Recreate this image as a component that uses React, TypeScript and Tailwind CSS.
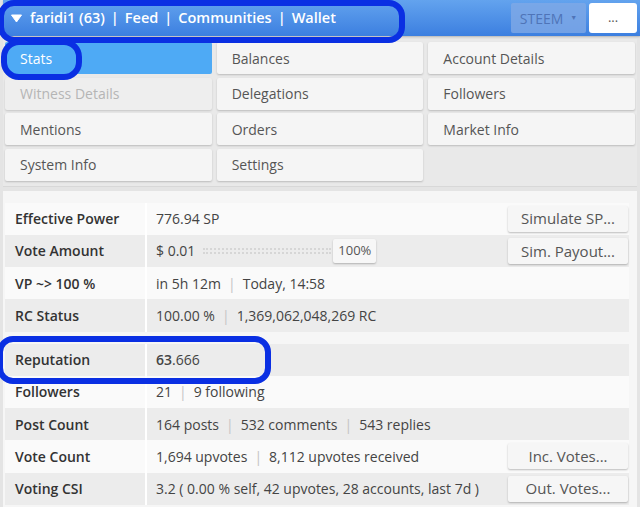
import React from 'react';

const font = { fontFamily: '"Open Sans", "Noto Sans", sans-serif' };

const navItems = [
  { label: 'Stats', active: true },
  { label: 'Balances' },
  { label: 'Account Details' },
  { label: 'Witness Details', disabled: true },
  { label: 'Delegations' },
  { label: 'Followers' },
  { label: 'Mentions' },
  { label: 'Orders' },
  { label: 'Market Info' },
  { label: 'System Info' },
  { label: 'Settings' },
];

function Sep({ wide }: { wide?: boolean }) {
  return <span className={`${wide ? 'mx-[6px] text-white' : 'mx-[7px] text-[#c4c4c4]'}`}>|</span>;
}

function Btn({ children }: { children: React.ReactNode }) {
  return (
    <div className="w-[120px] h-[26px] bg-[#f6f6f6] rounded-[2px] shadow-[0_1px_2px_rgba(0,0,0,0.25)] flex items-center justify-center text-[#555] text-[15px]">
      {children}
    </div>
  );
}

function Row({
  label,
  gray,
  children,
  action,
}: {
  label: string;
  gray?: boolean;
  children: React.ReactNode;
  action?: React.ReactNode;
}) {
  return (
    <div className={`flex h-[32.25px] items-center ${gray ? 'bg-[#ececec]' : 'bg-[#fafafa]'}`}>
      <div className="w-[142px] h-full flex items-center pl-[10px] font-semibold text-[#333] text-[14px] border-r-2 border-white">
        {label}
      </div>
      <div className="flex-1 flex items-center pl-[9px] text-[#444] text-[14px]">{children}</div>
      {action && <div className="pr-[1px]">{action}</div>}
    </div>
  );
}

export default function App() {
  return (
    <div className="relative w-[640px] h-[507px] overflow-hidden bg-[#e4e4e4]" style={font}>
      {/* header */}
      <div className="ml-[3px] h-[36px] rounded-bl-[3px] bg-gradient-to-b from-[#63a3ee] to-[#3c7fe0] flex items-center shadow-[0_1px_2px_rgba(0,0,0,0.2)]">
        <svg width="13" height="9" viewBox="0 0 13 9" className="ml-[7px] mr-[7px]">
          <path d="M1.5 1 L11.5 1 L6.5 8 Z" fill="#fff" stroke="#fff" strokeLinejoin="round" />
        </svg>
        <div className="text-white font-semibold text-[14.5px] flex items-center">
          <span>faridi1 (63)</span>
          <Sep wide />
          <span>Feed</span>
          <Sep wide />
          <span>Communities</span>
          <Sep wide />
          <span>Wallet</span>
        </div>
        <div className="ml-auto flex items-center gap-[3px] pr-[3px]">
          <div className="w-[75px] h-[30px] bg-[#7fa9e6]/80 rounded-[2px] flex items-center justify-center text-[#4f74b8] text-[14px]">
            STEEM <span className="ml-[7px] text-[7px]">▼</span>
          </div>
          <div className="w-[48px] h-[30px] bg-white rounded-[3px] flex items-center justify-center text-[#555] text-[13px]">
            ...
          </div>
        </div>
      </div>

      {/* nav grid */}
      <div className="mx-[3px] mt-[3px] bg-[#e9e9e9] px-[2px] pt-[3px] pb-[5px] border-b border-[#d8d8d8]">
        <div className="grid grid-cols-3 gap-x-[5px] gap-y-[3.5px]">
          {navItems.map((it) => (
            <div
              key={it.label}
              className={`h-[32px] flex items-center pl-[15px] text-[14px] rounded-[2px] ${
                it.active
                  ? 'bg-[#4eaaf5] text-white'
                  : it.disabled
                  ? 'bg-[#eeeeee] text-[#b5b5b5] shadow-[0_1px_2px_rgba(0,0,0,0.15)]'
                  : 'bg-[#f5f5f5] text-[#555] shadow-[0_1px_2px_rgba(0,0,0,0.2)]'
              }`}
            >
              {it.label}
            </div>
          ))}
        </div>
      </div>

      {/* stats table */}
      <div className="mx-[3px] mt-[4px] bg-[#f6f6f6] h-[330px] pt-[12px] px-[2px]">
        <div className="mr-[6px]">
          <Row label="Effective Power" action={<Btn>Simulate SP...</Btn>}>
            776.94 SP
          </Row>
          <Row label="Vote Amount" gray action={<Btn>Sim. Payout...</Btn>}>
            <span>$ 0.01</span>
            <div className="ml-[8px] w-[128px] h-[6px] border-t-2 border-b-2 border-dotted border-[#d6d6d6]" />
            <div className="ml-[2px] w-[43px] h-[24px] bg-[#f7f7f7] rounded-[2px] shadow-[0_1px_2px_rgba(0,0,0,0.25)] flex items-center justify-center text-[13px] text-[#555]">
              100%
            </div>
          </Row>
          <Row label="VP ~> 100 %">
            in 5h 12m<Sep />Today, 14:58
          </Row>
          <Row label="RC Status" gray>
            100.00 %<Sep />1,369,062,048,269 RC
          </Row>
          <div className="h-[12px]" />
          <Row label="Reputation" gray>
            <span className="font-semibold">63</span>.666
          </Row>
          <Row label="Followers">
            21<Sep />9 following
          </Row>
          <Row label="Post Count" gray>
            164 posts<Sep />532 comments<Sep />543 replies
          </Row>
          <Row label="Vote Count" action={<Btn>Inc. Votes...</Btn>}>
            1,694 upvotes<Sep />8,112 upvotes received
          </Row>
          <Row label="Voting CSI" gray action={<Btn>Out. Votes...</Btn>}>
            3.2 ( 0.00 % self, 42 upvotes, 28 accounts, last 7d )
          </Row>
        </div>
      </div>

      {/* annotations */}
      <div className="absolute left-[-2px] top-[0px] w-[407px] h-[43px] rounded-[16px] border-[6px] border-[#0a2fe3] pointer-events-none" />
      <div className="absolute left-[1px] top-[39px] w-[81px] h-[41px] rounded-[18px] border-[6px] border-[#0a2fe3] pointer-events-none" />
      <div className="absolute left-[-3px] top-[336px] w-[274px] h-[48px] rounded-[16px] border-[6px] border-[#0a2fe3] pointer-events-none" />
    </div>
  );
}
